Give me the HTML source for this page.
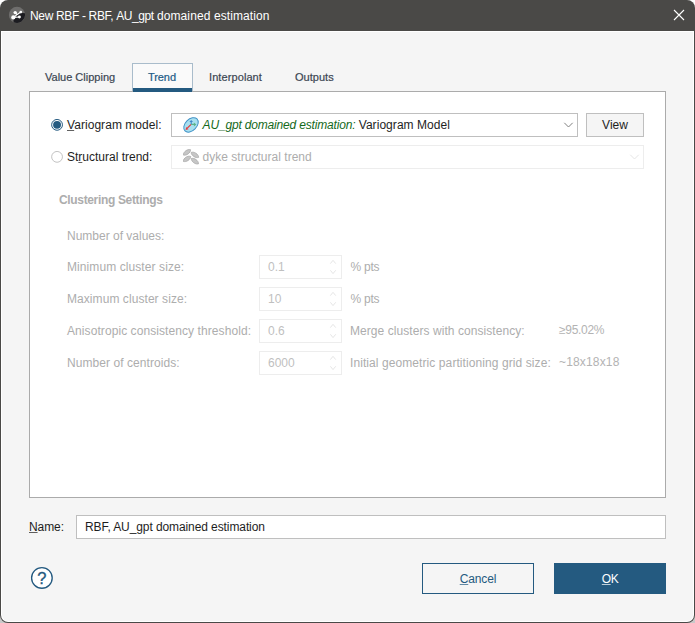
<!DOCTYPE html>
<html><head><meta charset="utf-8"><title>New RBF</title>
<style>
*{box-sizing:border-box;margin:0;padding:0}
html,body{width:695px;height:623px;overflow:hidden;background:#fff}
body{font-family:"Liberation Sans",sans-serif;font-size:12px;color:#1e1e1e;position:relative;background:linear-gradient(#fff 0,#fff 50%,#c9c9c9 50%,#c9c9c9 100%)}
.win{position:absolute;left:0;top:0;width:695px;height:623px;border-radius:8px;background:#4a4947;overflow:hidden}
.inner{position:absolute;left:1px;top:31px;width:693px;height:591px;background:#fff;border-radius:0 0 7px 7px}
.client{position:absolute;left:1px;top:1px;width:691px;height:589px;background:#f5f5f5;border-radius:0 0 6px 6px}
.abs{position:absolute;white-space:nowrap;line-height:14px}
.title{left:30px;top:8px;color:#fff;font-size:12px;line-height:16px;white-space:pre}
.tab{font-size:11px;color:#3b4652;-webkit-text-stroke:0.2px #3b4652}
.panel{position:absolute;left:29px;top:91px;width:637px;height:407px;background:#fff;border:1px solid #ababab}
.dis{color:#adadad}
.box{position:absolute;background:#fff;border:1px solid #bfbfbf}
.dbox{position:absolute;background:#fff;border:1px solid #ededed}
u{text-decoration:underline;text-underline-offset:1px;text-decoration-thickness:1px;text-decoration-color:color-mix(in srgb,currentColor 70%,transparent)}
</style></head><body>
<div class="win">
  <svg class="abs" style="left:8px;top:6px" width="18" height="18" viewBox="0 0 18 18">
    <circle cx="9" cy="8.9" r="8.1" fill="#6f6e6d"/>
    <path d="M5.3 11.4 L12.3 6.7 L16.9 7.3 A8.1 8.1 0 0 1 5.6 16.2 Z" fill="#1c1c21"/>
    <path d="M5.3 11.4 L12.8 6.05 M5.3 11.4 L11.4 11.05 M7.2 6.6 L9.5 9" stroke="#fff" stroke-width="1.1" fill="none"/>
    <circle cx="5.3" cy="11.4" r="2.1" fill="#fff"/><circle cx="7.2" cy="6.6" r="1.7" fill="#fff"/><circle cx="12.8" cy="6.05" r="1.35" fill="#fff"/><circle cx="11.4" cy="11.05" r="1.45" fill="#fff"/>
  </svg>
  <div class="abs title"><span style="letter-spacing:-.34px">New RBF - RBF, </span><span style="letter-spacing:-.46px">AU_gpt</span><span style="letter-spacing:.1px"> domained estimation</span></div>
  <svg class="abs" style="left:673px;top:9px" width="12" height="12" viewBox="0 0 12 12"><path d="M1 1 L11 11 M11 1 L1 11" stroke="#fff" stroke-width="1.1" fill="none"/></svg>
  <div class="inner"><div class="client"></div></div>

  <!-- tabs -->
  <div class="abs tab" style="left:45px;top:70px;">Value Clipping</div>
  <div style="position:absolute;left:132px;top:63px;width:61px;height:29px;background:#fafafa;border:1px solid #a9bccb;border-bottom:none"></div>
  <div class="abs tab" style="left:148px;top:70px;color:#225a86;-webkit-text-stroke-color:#225a86;letter-spacing:-0.08px">Trend</div>
  <div class="abs tab" style="left:209px;top:70px;;letter-spacing:0.09px">Interpolant</div>
  <div class="abs tab" style="left:295px;top:70px;;letter-spacing:0.03px">Outputs</div>

  <div class="panel"></div>
  <div style="position:absolute;left:133px;top:88px;width:59px;height:4px;background:#245a80"></div>

  <!-- row 1 -->
  <svg class="abs" style="left:50px;top:118px" width="14" height="14" viewBox="0 0 14 14"><circle cx="7.05" cy="6.85" r="5.4" fill="#fff" stroke="#245a80" stroke-width="1"/><circle cx="7.05" cy="6.85" r="3.95" fill="#245a80"/></svg>
  <div class="abs" style="left:67px;top:118px"><span style="letter-spacing:.052px"><u>V</u>ariogram model:</span></div>
  <div class="box" style="left:171px;top:113px;width:407px;height:24px"></div>
  <svg class="abs" style="left:182px;top:116px" width="18" height="18" viewBox="0 0 18 18">
    <ellipse cx="9" cy="8.9" rx="8.5" ry="5.7" transform="rotate(-45 9 8.9)" fill="#a8e0f0" stroke="#4292c6" stroke-width="1"/>
    <path d="M9.1 8.3 L5.4 12" stroke="#e8383a" stroke-width="1.1"/><path d="M3.5 13.9 L4.3 10.9 L6.6 13.2Z" fill="#e8383a"/>
    <path d="M9.1 8.4 L12.2 8.4" stroke="#5cb38a" stroke-width="1.1"/><path d="M14.4 8.5 L11.9 6.5 L11.9 10.4Z" fill="#5cb38a"/>
    <path d="M9.2 8.3 L9.2 6" stroke="#3f86c8" stroke-width="1.1"/><path d="M9.2 3.9 L7.4 6 L11 6Z" fill="#3f86c8"/>
  </svg>
  <div class="abs" style="left:202.6px;top:118px"><i style="color:#14691a;letter-spacing:-.174px">AU_gpt domained estimation:</i><span style="letter-spacing:.053px"> Variogram Model</span></div>
  <svg class="abs" style="left:563px;top:121px" width="12" height="8" viewBox="0 0 12 8"><path d="M1.3 1.8 L5.5 6 L9.7 1.8" stroke="#808080" stroke-width="1" fill="none"/></svg>
  <div class="box" style="left:586px;top:113px;width:58px;height:24px;background:#f5f5f5"></div>
  <div class="abs" style="left:586px;top:118px;width:58px;text-align:center">View</div>

  <!-- row 2 -->
  <svg class="abs" style="left:50px;top:150px" width="14" height="14" viewBox="0 0 14 14"><circle cx="7.05" cy="6.85" r="5.4" fill="#fff" stroke="#c2c2c2" stroke-width="1"/></svg>
  <div class="abs" style="left:67px;top:150px">St<u>r</u>uctural trend:</div>
  <div class="dbox" style="left:171px;top:145px;width:473px;height:24px"></div>
  <svg class="abs" style="left:183px;top:149px" width="17" height="16" viewBox="0 0 17 16" fill="#c6c6c6" stroke="#a9a9a9" stroke-width="0.7">
    <path d="M-4.5 0 C-2.6 -2.6 2.6 -2.6 4.5 0 C2.6 2.6 -2.6 2.6 -4.5 0Z" transform="translate(3.95 3.35) rotate(-36)"/>
    <path d="M-4.5 0 C-2.6 -2.6 2.6 -2.6 4.5 0 C2.6 2.6 -2.6 2.6 -4.5 0Z" transform="translate(11.9 5.9) rotate(33)"/>
    <path d="M-4.5 0 C-2.6 -2.6 2.6 -2.6 4.5 0 C2.6 2.6 -2.6 2.6 -4.5 0Z" transform="translate(3.95 9.9) rotate(-33)"/>
    <path d="M-4.5 0 C-2.6 -2.6 2.6 -2.6 4.5 0 C2.6 2.6 -2.6 2.6 -4.5 0Z" transform="translate(11.9 12.15) rotate(36)"/>
  </svg>
  <div class="abs dis" style="left:202.5px;top:150px;letter-spacing:0.026px">dyke structural trend</div>
  <svg class="abs" style="left:629px;top:153px" width="12" height="8" viewBox="0 0 12 8"><path d="M1.3 1.8 L5.5 6 L9.7 1.8" stroke="#e6e6e6" stroke-width="1" fill="none"/></svg>

  <!-- clustering -->
  <div class="abs dis" style="left:59px;top:193px;font-weight:bold;letter-spacing:-0.343px">Clustering Settings</div>
  <div class="abs dis" style="left:67px;top:229px">Number of values:</div>
  <div class="abs dis" style="left:67px;top:260px;letter-spacing:0.086px">Minimum cluster size:</div>
  <div class="abs dis" style="left:67px;top:292px;letter-spacing:0.067px">Maximum cluster size:</div>
  <div class="abs dis" style="left:67px;top:324px;letter-spacing:0.077px">Anisotropic consistency threshold:</div>
  <div class="abs dis" style="left:67px;top:356px;letter-spacing:0.062px">Number of centroids:</div>

  <div class="dbox" style="left:259px;top:255px;width:83px;height:24px"></div>
  <div class="dbox" style="left:259px;top:287px;width:83px;height:24px"></div>
  <div class="dbox" style="left:259px;top:319px;width:83px;height:24px"></div>
  <div class="dbox" style="left:259px;top:351px;width:83px;height:24px"></div>
  <div class="abs" style="left:268px;top:260px;color:#bfbfbf">0.1</div>
  <div class="abs" style="left:268px;top:292px;color:#bfbfbf">10</div>
  <div class="abs" style="left:268px;top:324px;color:#bfbfbf">0.6</div>
  <div class="abs" style="left:268px;top:356px;color:#bfbfbf">6000</div>
  <svg class="abs" style="left:329px;top:259px" width="9" height="112" viewBox="0 0 9 112" fill="none" stroke="#e6e6e6" stroke-width="1">
    <path d="M1.4 4.6 L4 1.3 L6.7 4.6 M1.4 11.3 L4 14.6 L6.7 11.3"/>
    <path d="M1.4 36.6 L4 33.3 L6.7 36.6 M1.4 43.3 L4 46.6 L6.7 43.3"/>
    <path d="M1.4 68.6 L4 65.3 L6.7 68.6 M1.4 75.3 L4 78.6 L6.7 75.3"/>
    <path d="M1.4 100.6 L4 97.3 L6.7 100.6 M1.4 107.3 L4 110.6 L6.7 107.3"/>
  </svg>
  <div class="abs dis" style="left:350.6px;top:260px;letter-spacing:-0.28px">% pts</div>
  <div class="abs dis" style="left:350.6px;top:292px;letter-spacing:-0.28px">% pts</div>
  <div class="abs dis" style="left:350px;top:324px;letter-spacing:0.062px">Merge clusters with consistency:</div>
  <div class="abs dis" style="left:350px;top:356px;letter-spacing:0.083px">Initial geometric partitioning grid size:</div>
  <div class="abs dis" style="color:#b3b3b3;left:559px;top:323px;letter-spacing:-0.3px">≥95.02%</div>
  <div class="abs dis" style="color:#b3b3b3;left:559px;top:355px;letter-spacing:0.165px">~18x18x18</div>

  <!-- name -->
  <div class="abs" style="left:29px;top:520px"><span style="letter-spacing:-.09px"><u>N</u>ame:</span></div>
  <div class="box" style="left:76px;top:515px;width:590px;height:24px"></div>
  <div class="abs" style="left:85px;top:520px;letter-spacing:-0.094px">RBF, AU_gpt domained estimation</div>

  <!-- help -->
  <svg class="abs" style="left:30px;top:566px" width="24" height="24" viewBox="0 0 24 24"><circle cx="11.9" cy="11.9" r="10.3" fill="#fff" stroke="#245a80" stroke-width="1.35"/></svg>
  <div class="abs" style="left:30px;top:568.9px;width:23.6px;text-align:center;font-size:16.5px;line-height:19px;color:#245a80;-webkit-text-stroke:0.3px #245a80">?</div>

  <!-- buttons -->
  <div class="box" style="left:422px;top:563px;width:112px;height:31px;background:#f5f5f5;border-color:#245a80"></div>
  <div class="abs" style="left:422px;top:572px;width:112px;text-align:center;color:#245a80"><span style="letter-spacing:-.138px"><u>C</u>ancel</span></div>
  <div style="position:absolute;left:554px;top:563px;width:112px;height:31px;background:#245a80"></div>
  <div class="abs" style="left:554px;top:572px;width:112px;text-align:center;color:#fff"><span style="letter-spacing:-.5px"><u>O</u>K</span></div>
</div>
</body></html>
